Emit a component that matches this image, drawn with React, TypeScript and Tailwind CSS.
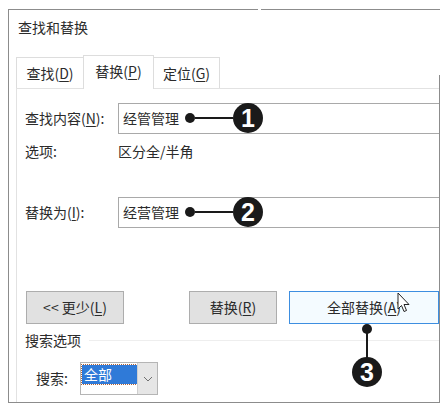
import React from 'react';

const FONT = { fontFamily: '"Noto Sans CJK SC", "Noto Sans", sans-serif' };

const Key = ({ k }: { k: string }) => (
  <span>
    (<span className="underline underline-offset-2">{k}</span>)
  </span>
);

const Callout = ({ x, y, n, vertical }: { x: number; y: number; n: string; vertical?: boolean }) => {
  // x,y = small dot centre
  if (vertical) {
    return (
      <div className="absolute" style={{ left: x - 5, top: y - 5 }}>
        <div className="w-[10px] h-[10px] rounded-full bg-[#1a1a1a]" />
        <div className="absolute left-[4px] top-[5px] w-[2px] h-[32px] bg-[#1a1a1a]" />
        <div
          className="absolute left-[-10px] top-[33px] w-[30px] h-[30px] rounded-full bg-[#1a1a1a] text-white flex items-center justify-center text-[25px] font-bold leading-none"
          style={{ fontFamily: '"Liberation Sans", sans-serif' }}
        >
          {n}
        </div>
      </div>
    );
  }
  return (
    <div className="absolute flex items-center" style={{ left: x - 5, top: y - 15 }}>
      <div className="w-[10px] h-[10px] rounded-full bg-[#1a1a1a]" />
      <div className="w-[38px] h-[2px] bg-[#1a1a1a]" />
      <div
        className="w-[30px] h-[30px] rounded-full bg-[#1a1a1a] text-white flex items-center justify-center text-[25px] font-bold leading-none"
        style={{ fontFamily: '"Liberation Sans", sans-serif' }}
      >
        {n}
      </div>
    </div>
  );
};

export default function App() {
  return (
    <div className="relative w-[447px] h-[411px] bg-white overflow-hidden text-[14px] text-[#2b2b2b]" style={FONT}>
      <div className="absolute left-[8px] top-[9px] w-[432px] h-[394px] border border-[#8c8c8c] flex flex-col">
        {/* title */}
        <div className="mt-[7px] pl-[9px] h-[20px] leading-[20px]">查找和替换</div>

        {/* tabs */}
        <div className="mt-[18px] pl-[7px] flex items-end h-[33px]">
          <div className="w-[67px] h-[31px] border-t border-l border-[#dddddd] flex items-center justify-center">
            查找<Key k="D" />
          </div>
          <div className="w-[71px] h-[34px] -mb-px border-t border-l border-r border-[#dddddd] bg-white relative z-10 flex items-center justify-center pb-[3px]">
            替换<Key k="P" />
          </div>
          <div className="w-[66px] h-[31px] border-t border-r border-[#dddddd] flex items-center justify-center">
            定位<Key k="G" />
          </div>
        </div>

        {/* panel */}
        <div className="ml-[7px] flex-1 border-t border-l border-[#e2e2e2] pl-[8px] flex flex-col">
          <div className="mt-[14px] flex items-center h-[31px]">
            <div className="w-[93px]">
              查找内容<Key k="N" />:
            </div>
            <div className="flex-1 h-[31px] border border-r-0 border-[#a9a9a9] pl-[4px] flex items-center">经管管理</div>
          </div>
          <div className="mt-[7px] flex items-center h-[20px]">
            <div className="w-[93px]">选项:</div>
            <div>区分全/半角</div>
          </div>
          <div className="mt-[36px] flex items-center h-[31px]">
            <div className="w-[93px]">
              替换为<Key k="I" />:
            </div>
            <div className="flex-1 h-[31px] border border-r-0 border-[#a9a9a9] pl-[4px] flex items-center">经营管理</div>
          </div>

          {/* buttons */}
          <div className="mt-[63px] flex items-center h-[33px]">
            <div className="ml-[1px] w-[98px] h-[33px] bg-[#e1e1e1] border border-[#adadad] flex items-center justify-center">
              &lt;&lt; 更少<Key k="L" />
            </div>
            <div className="ml-[65px] w-[88px] h-[33px] bg-[#e1e1e1] border border-[#adadad] flex items-center justify-center">
              替换<Key k="R" />
            </div>
            <div className="ml-[12px] w-[150px] h-[33px] bg-[#f4fbff] border border-[#3d8ee0] flex items-center justify-center">
              全部替换<Key k="A" />
            </div>
          </div>

          <div className="mt-[6px] flex items-center h-[20px]">
            <span>搜索选项</span>
            <div className="ml-[8px] flex-1 h-px bg-[#eeeeee]" />
          </div>

          <div className="mt-[12px] flex items-center h-[33px]">
            <div className="ml-[11px] w-[44px]">搜索:</div>
            <div className="w-[78px] h-[33px] border border-[#b5b5b5] flex bg-white">
              <div className="flex-1 pt-[2px] pl-[1px]">
                <div className="h-[19px] bg-[#2f7ad8] text-white leading-[19px] pl-[2px] outline-1 outline-dotted outline-[#b0643a]">
                  全部
                </div>
              </div>
              <div className="w-[20px] bg-[#e6e6e6] border-l border-[#cfcfcf] flex items-center justify-center">
                <svg width="10" height="6" viewBox="0 0 10 6">
                  <path d="M1 1 L5 5 L9 1" fill="none" stroke="#707070" strokeWidth="1" />
                </svg>
              </div>
            </div>
          </div>
        </div>
      </div>

      {/* top border gap */}
      <div className="absolute left-[258px] top-[8px] w-[3px] h-[3px] bg-white" />
      {/* hide top of right border */}
      <div className="absolute left-[438px] top-[10px] w-[3px] h-[65px] bg-white" />

      <Callout x={190} y={118} n="1" />
      <Callout x={190} y={212} n="2" />
      <Callout x={367} y={329} n="3" vertical />

      {/* mouse cursor */}
      <svg className="absolute left-[397px] top-[292px]" width="14" height="22" viewBox="0 0 14 22">
        <path
          d="M1 1 L1 17 L4.5 13.5 L7 19.5 L9.5 18.5 L7 12.5 L12 12.5 Z"
          fill="white"
          stroke="#222"
          strokeWidth="1"
          strokeLinejoin="round"
        />
      </svg>
    </div>
  );
}
